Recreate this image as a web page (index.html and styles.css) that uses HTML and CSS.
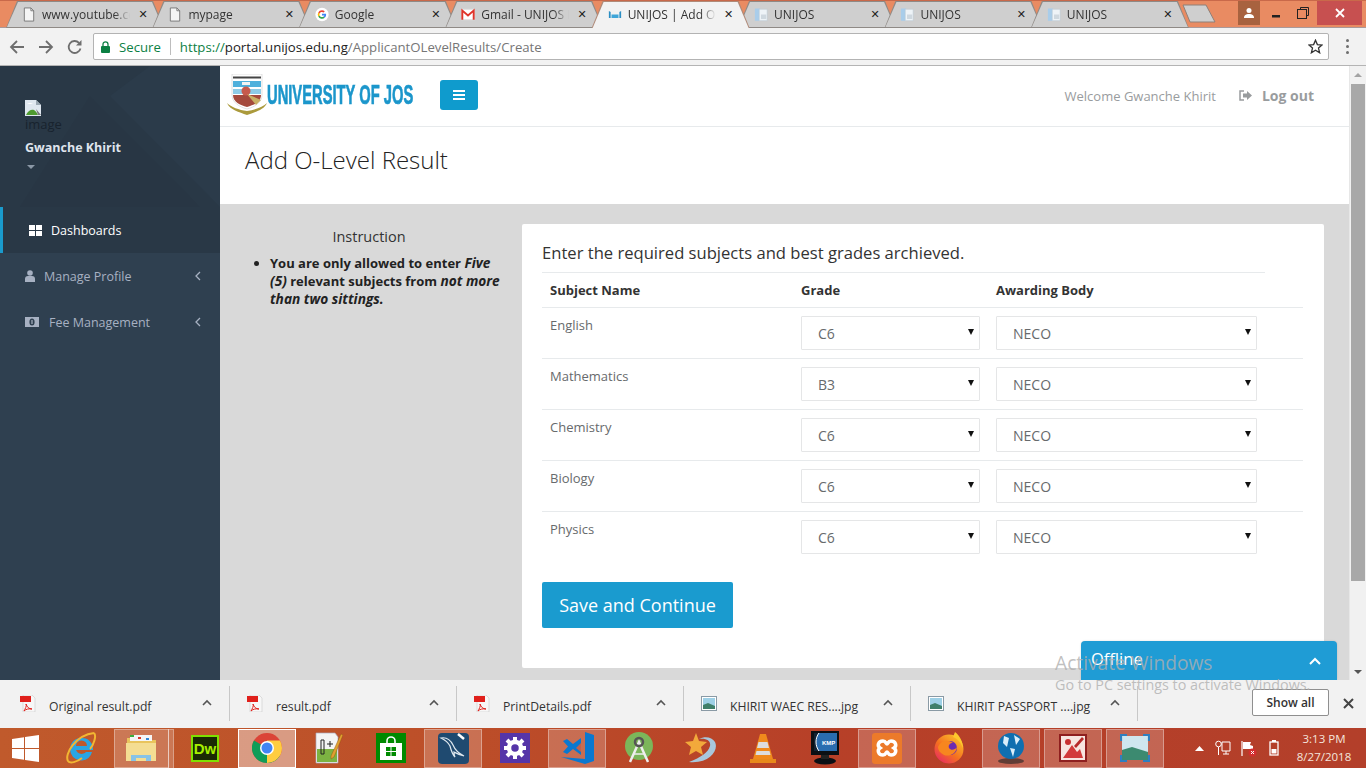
FILE: index.html
```html
<!DOCTYPE html>
<html lang="en">
<head>
<meta charset="utf-8">
<title>UNIJOS | Add O-Level Result</title>
<link rel="stylesheet" href="styles.css">
</head>
<body>
<div class="tabstrip">
  <div class="tab"><svg class="ticon" viewBox="0 0 14 16"><path d="M2 1h7l3 3v11H2z" fill="#f4f4f4" stroke="#777"/><path d="M9 1v3h3" fill="none" stroke="#777"/></svg><span class="ttl">www.youtube.com</span><span class="tx">✕</span></div>
  <div class="tab"><svg class="ticon" viewBox="0 0 14 16"><path d="M2 1h7l3 3v11H2z" fill="#f4f4f4" stroke="#777"/><path d="M9 1v3h3" fill="none" stroke="#777"/></svg><span class="ttl">mypage</span><span class="tx">✕</span></div>
  <div class="tab"><svg class="ticon" viewBox="0 0 16 16"><circle cx="8" cy="8" r="7.6" fill="#fff"/><path d="M8 3.2a4.8 4.8 0 0 1 3.2 1.2L9.900 5.700A3 3 0 0 0 5.200 7L3.700 5.800A4.800 4.800 0 0 1 8 3.200z" fill="#ea4335"/><path d="M3.700 5.800 5.200 7a3 3 0 0 0 0 2L3.700 10.200a4.800 4.800 0 0 1 0-4.400z" fill="#fbbc05"/><path d="M3.700 10.200 5.200 9a3 3 0 0 0 4.600 1.400l1.400 1.200A4.800 4.800 0 0 1 3.700 10.200z" fill="#34a853"/><path d="M8 7.100h4.700a4.800 4.800 0 0 1-1.500 4.500L9.800 10.400A2 2 0 0 0 10.600 9H8z" fill="#4285f4"/></svg><span class="ttl">Google</span><span class="tx">✕</span></div>
  <div class="tab"><svg class="ticon" viewBox="0 0 16 14"><rect x="0.500" y="1" width="15" height="12" fill="#fff" stroke="#ddd"/><path d="M1.500 13V2.500L8 8l6.500-5.500V13" fill="none" stroke="#e0352b" stroke-width="2.200"/></svg><span class="ttl">Gmail - UNIJOS Mail</span><span class="tx">✕</span></div>
  <div class="tab active"><svg class="ticon" viewBox="0 0 16 14"><path d="M1 3l2 1v7H1z" fill="#2a8ec4"/><path d="M4 7h8v4H4z" fill="#3fa5d8"/><path d="M13 4l2-1v8h-2z" fill="#2a8ec4"/></svg><span class="ttl">UNIJOS | Add O-Level</span><span class="tx">✕</span></div>
  <div class="tab"><svg class="ticon" viewBox="0 0 16 16"><path d="M1 1h6v14H1z" fill="#a9cdea"/><path d="M6 2h9v13H6z" fill="#eef3f7" stroke="#b9c7d2" stroke-width=".6"/><path d="M8 8h6v5H8z" fill="#cfd8df"/></svg><span class="ttl">UNIJOS</span><span class="tx">✕</span></div>
  <div class="tab"><svg class="ticon" viewBox="0 0 16 16"><path d="M1 1h6v14H1z" fill="#a9cdea"/><path d="M6 2h9v13H6z" fill="#eef3f7" stroke="#b9c7d2" stroke-width=".6"/><path d="M8 8h6v5H8z" fill="#cfd8df"/></svg><span class="ttl">UNIJOS</span><span class="tx">✕</span></div>
  <div class="tab"><svg class="ticon" viewBox="0 0 16 16"><path d="M1 1h6v14H1z" fill="#a9cdea"/><path d="M6 2h9v13H6z" fill="#eef3f7" stroke="#b9c7d2" stroke-width=".6"/><path d="M8 8h6v5H8z" fill="#cfd8df"/></svg><span class="ttl">UNIJOS</span><span class="tx">✕</span></div>
  <svg class="newtab" width="36" height="22" viewBox="0 0 36 22"><path d="M1 2h23l9 17H8z" fill="#cfcfcf" stroke="#8f8078"/></svg>
  <div class="winctl">
    <div class="wuser"><svg width="12" height="12" viewBox="0 0 12 12"><circle cx="6" cy="3.500" r="2.500" fill="#fff"/><path d="M1 11c0-3 2-4 5-4s5 1 5 4z" fill="#fff"/></svg></div>
    <div class="wbtn"><svg width="10" height="10" viewBox="0 0 10 10"><rect x="1" y="7" width="8" height="2.500" fill="#222"/></svg></div>
    <div class="wbtn"><svg width="12" height="12" viewBox="0 0 12 12"><path d="M3.500 2.500V.5h8v8h-2" fill="none" stroke="#222"/><rect x=".5" y="2.500" width="9" height="9" fill="none" stroke="#222"/></svg></div>
    <div class="wclose"><svg width="10" height="10" viewBox="0 0 10 10"><path d="M1 1l8 8M9 1l-8 8" stroke="#fff" stroke-width="1.800"/></svg></div>
  </div>
</div>

<div class="toolbar">
  <svg class="navi" viewBox="0 0 16 16"><path d="M15 8H2M8 2L2 8l6 6" fill="none" stroke="#6e6e6e" stroke-width="1.800"/></svg>
  <svg class="navi" viewBox="0 0 16 16"><path d="M1 8h13M8 2l6 6-6 6" fill="none" stroke="#6e6e6e" stroke-width="1.800"/></svg>
  <svg class="navi" viewBox="0 0 16 16"><path d="M13.500 9.500A6 6 0 1 1 12 3.800" fill="none" stroke="#6e6e6e" stroke-width="1.800"/><path d="M14.500 1v5.500H9z" fill="#6e6e6e"/></svg>
  <div class="omni">
    <svg class="lock" width="9" height="12" viewBox="0 0 9 12"><path d="M2 5V3.300a2.500 2.500 0 0 1 5 0V5" fill="none" stroke="#0b8043" stroke-width="1.300"/><rect y="5" width="9" height="7" rx="1" fill="#0b8043"/></svg>
    <span class="secure">Secure</span><span class="osep"></span>
    <span class="url"><span class="g">https://</span><span class="d">portal.unijos.edu.ng</span>/ApplicantOLevelResults/Create</span>
    <svg class="star" width="15" height="15" viewBox="0 0 16 16"><path d="M8 1.300l2 4.700 5 .4-3.800 3.300 1.200 5L8 12l-4.400 2.700 1.200-5L1 6.400 6 6z" fill="none" stroke="#333" stroke-width="1.400"/></svg>
  </div>
  <div class="kebab"><i></i><i></i><i></i></div>
</div>

<div class="viewport">
  <aside class="sidebar">
    <div class="profile">
      <svg class="prof-bg" width="220" height="141" viewBox="0 0 220 141"><path d="M0 0h150L110 30 220 141H0z" fill="#293846"/><path d="M90 30l110 111H20z" fill="#283644"/></svg>
      <div class="prof-in">
        <svg class="broken" width="16" height="16" viewBox="0 0 16 16"><path d="M0 0h11l5 5v11H0z" fill="#dfe7ef"/><path d="M11 0l5 5h-5z" fill="#9aa7b2"/><path d="M1 15c2-5 6-6 8-5s3 3 4 5z" fill="#4e9a2f"/><path d="M2 4q3-2 6 0z" fill="#fff"/><path d="M11 9l5 6h-3z" fill="#777"/></svg>
        <div class="alt">image</div>
        <div class="uname">Gwanche Khirit</div>
        <div class="caret"></div>
      </div>
    </div>
    <nav class="nav">
      <a class="item on"><svg class="i-dash" width="13" height="11" viewBox="0 0 13 11"><path d="M0 0h6v5H0zM7 0h6v5H7zM0 6h6v5H0zM7 6h6v5H7z" fill="#fff"/></svg><span>Dashboards</span></a>
      <a class="item"><svg class="i-user" width="10" height="12" viewBox="0 0 10 12"><circle cx="5" cy="3" r="2.800" fill="#a7b1c2"/><path d="M0 12V9q0-3 3-3h4q3 0 3 3v3z" fill="#a7b1c2"/></svg><span>Manage Profile</span><svg class="chev" width="6" height="10" viewBox="0 0 6 10"><path d="M5 1L1 5l4 4" fill="none" stroke="#a7b1c2" stroke-width="1.300"/></svg></a>
      <a class="item"><svg class="i-money" width="14" height="10" viewBox="0 0 14 10"><path d="M0 0h14v10H0z" fill="#a7b1c2"/><ellipse cx="7" cy="5" rx="2.600" ry="3.500" fill="#2f4050"/><rect x="6.400" y="3" width="1.200" height="4" fill="#a7b1c2"/></svg><span>Fee Management</span><svg class="chev" width="6" height="10" viewBox="0 0 6 10"><path d="M5 1L1 5l4 4" fill="none" stroke="#a7b1c2" stroke-width="1.300"/></svg></a>
    </nav>
  </aside>

  <main class="main">
    <header class="topbar">
      <svg class="crest" width="40" height="42" viewBox="0 0 40 42">
        <path d="M5 0h30v21c0 7-7 12-15 14C12 33 5 28 5 21z" fill="#fff" stroke="#cfcfcf" stroke-width=".6"/>
        <path d="M6 2.500h28v2H6z" fill="#444"/>
        <path d="M6 7h28v6H6z" fill="#4fb0dc"/><path d="M6 15h28v5H6z" fill="#8ecbe6"/>
        <path d="M6 21h28c0 7-7 10-14 12C13 31 6 28 6 21z" fill="#a4493c"/>
        <circle cx="19" cy="17" r="4.500" fill="#c65a4c"/><path d="M15 8h8v3h-8z" fill="#f4f4f4"/><path d="M20 20l14 6-5 5z" fill="#c9b064"/>
        <path d="M0 29c3 7 12 9 20 12 8-3 17-5 20-12-4 4-12 7-20 8-8-1-16-4-20-8z" fill="#ab9a3c"/>
      </svg>
      <div class="logotext"><span>UNIVERSITY OF JOS</span></div>
      <button class="burger" type="button" aria-label="Menu"><i></i><i></i><i></i></button>
      <div class="welcome">Welcome Gwanche Khirit</div>
      <a class="logout"><svg width="13" height="11" viewBox="0 0 13 11"><path d="M5 1H1v9h4" fill="none" stroke="#999c9e" stroke-width="1.500"/><path d="M4 3.500h4V1l5 4.500L8 10V7.500H4z" fill="#999c9e"/></svg><b>Log out</b></a>
    </header>
    <div class="pagehead"><h2>Add O-Level Result</h2></div>
    <div class="content">
      <div class="instr">
        <h4>Instruction</h4>
        <ul>
          <li>You are only allowed to enter <em>Five (5)</em> relevant subjects from <em>not more than two sittings.</em></li>
        </ul>
      </div>
      <section class="card">
        <h3>Enter the required subjects and best grades archieved.</h3>
        <table class="grid">
          <thead><tr><th class="c1">Subject Name</th><th class="c2">Grade</th><th>Awarding Body</th></tr></thead>
          <tbody>
            <tr><td>English</td><td><div class="sel g"><select><option>C6</option></select></div></td><td><div class="sel b"><select><option>NECO</option></select></div></td></tr>
            <tr><td>Mathematics</td><td><div class="sel g"><select><option>B3</option></select></div></td><td><div class="sel b"><select><option>NECO</option></select></div></td></tr>
            <tr><td>Chemistry</td><td><div class="sel g"><select><option>C6</option></select></div></td><td><div class="sel b"><select><option>NECO</option></select></div></td></tr>
            <tr><td>Biology</td><td><div class="sel g"><select><option>C6</option></select></div></td><td><div class="sel b"><select><option>NECO</option></select></div></td></tr>
            <tr><td>Physics</td><td><div class="sel g"><select><option>C6</option></select></div></td><td><div class="sel b"><select><option>NECO</option></select></div></td></tr>
          </tbody>
        </table>
        <button class="save" type="button">Save and Continue</button>
      </section>
    </div>
  </main>

  <div class="scrollbar"><div class="up"></div><div class="thumb"></div><div class="down"></div></div>
  <div class="offline"><span>Offline</span><svg width="12" height="8" viewBox="0 0 12 8"><path d="M1 7l5-5 5 5" fill="none" stroke="#fff" stroke-width="2"/></svg></div>
</div>

<div class="downloads">
  <div class="dl first"><svg class="dicon" width="16" height="17" viewBox="0 0 16 17"><path d="M3 0h9l3 3v14H3z" fill="#f7f7f7" stroke="#c9c9c9" stroke-width=".6"/><rect y="1" width="11" height="6" fill="#e0201b"/><path d="M6 9c1 3 3 5 6 5-3-.5-6 0-8 2 1-2 3-5 2-7z" fill="none" stroke="#e0201b"/></svg><span class="dn">Original result.pdf</span><svg class="dc" width="10" height="7" viewBox="0 0 10 7"><path d="M1 6l4-4 4 4" fill="none" stroke="#555" stroke-width="1.600"/></svg></div>
  <div class="dl"><svg class="dicon" width="16" height="17" viewBox="0 0 16 17"><path d="M3 0h9l3 3v14H3z" fill="#f7f7f7" stroke="#c9c9c9" stroke-width=".6"/><rect y="1" width="11" height="6" fill="#e0201b"/><path d="M6 9c1 3 3 5 6 5-3-.5-6 0-8 2 1-2 3-5 2-7z" fill="none" stroke="#e0201b"/></svg><span class="dn">result.pdf</span><svg class="dc" width="10" height="7" viewBox="0 0 10 7"><path d="M1 6l4-4 4 4" fill="none" stroke="#555" stroke-width="1.600"/></svg></div>
  <div class="dl"><svg class="dicon" width="16" height="17" viewBox="0 0 16 17"><path d="M3 0h9l3 3v14H3z" fill="#f7f7f7" stroke="#c9c9c9" stroke-width=".6"/><rect y="1" width="11" height="6" fill="#e0201b"/><path d="M6 9c1 3 3 5 6 5-3-.5-6 0-8 2 1-2 3-5 2-7z" fill="none" stroke="#e0201b"/></svg><span class="dn">PrintDetails.pdf</span><svg class="dc" width="10" height="7" viewBox="0 0 10 7"><path d="M1 6l4-4 4 4" fill="none" stroke="#555" stroke-width="1.600"/></svg></div>
  <div class="dl"><svg class="dicon" width="16" height="15" viewBox="0 0 16 15"><rect x=".5" y=".5" width="15" height="14" fill="#fff" stroke="#8a9aa5"/><rect x="2" y="2" width="12" height="11" fill="#9ed0e6"/><path d="M2 9l5-2 7 3v3H2z" fill="#3f7f6a"/></svg><span class="dn">KHIRIT WAEC RES....jpg</span><svg class="dc" width="10" height="7" viewBox="0 0 10 7"><path d="M1 6l4-4 4 4" fill="none" stroke="#555" stroke-width="1.600"/></svg></div>
  <div class="dl"><svg class="dicon" width="16" height="15" viewBox="0 0 16 15"><rect x=".5" y=".5" width="15" height="14" fill="#fff" stroke="#8a9aa5"/><rect x="2" y="2" width="12" height="11" fill="#9ed0e6"/><path d="M2 9l5-2 7 3v3H2z" fill="#3f7f6a"/></svg><span class="dn">KHIRIT PASSPORT ....jpg</span><svg class="dc" width="10" height="7" viewBox="0 0 10 7"><path d="M1 6l4-4 4 4" fill="none" stroke="#555" stroke-width="1.600"/></svg></div>
  <button class="showall" type="button">Show all</button>
  <svg class="dlx" width="11" height="11" viewBox="0 0 11 11"><path d="M1 1l9 9M10 1l-9 9" stroke="#444" stroke-width="2"/></svg>
</div>

<div class="taskbar">
  <div class="start"><svg width="27" height="27" viewBox="0 0 27 27"><path d="M0 4l12-1.700V13H0zM13 2.100L27 0v13H13zM0 14h12v10.700L0 23zM13 14h14v13l-14-2z" fill="#fff"/></svg></div>
  <div class="slot"><svg width="32" height="34" viewBox="0 0 32 34"><path d="M16 7a11 11 0 0 0-10 15.500A11 11 0 0 0 27 21h-6a6 6 0 0 1-10-2h17a11 11 0 0 0-12-12zm-5 8a5.500 5.500 0 0 1 11 0z" fill="#2ba5e2"/><path d="M3 30c-4-7 8-26 26-28M29 2c3 3-1 13-4 16M3 30c2 3 9 1 14-3" fill="none" stroke="#f2b632" stroke-width="2"/></svg></div>
  <div class="slot on stack"><div class="box"><svg width="32" height="30" viewBox="0 0 32 30"><path d="M2 5h7l2 2h20v12H2z" fill="#e9c45c"/><path d="M5 2h22v6H5z" fill="#f5f5f5"/><path d="M5 2h4v2H5z" fill="#3cae3c"/><path d="M13 4h3v2h-3z" fill="#d83a2c"/><path d="M21 5h3v2h-3z" fill="#2d86d6"/><path d="M1 10h30v18H1z" fill="#f4dd92"/><path d="M6 22h20v6h-5v-3H11v3H6z" fill="#87c3e6"/></svg></div></div>
  <div class="slot"><div class="dw"><span>Dw</span></div></div>
  <div class="slot on act"><div class="box"><svg width="30" height="30" viewBox="0 0 30 30"><circle cx="15" cy="15" r="15" fill="#db4437"/><path d="M15 15L28 22.500A15 15 0 0 1 15 30 15 15 0 0 1 2 7.500z" fill="#0f9d58"/><path d="M15 15L15 30A15 15 0 0 0 30 15 15 15 0 0 0 28 7.500H15z" fill="#ffcd40"/><circle cx="15" cy="15" r="7" fill="#fff"/><circle cx="15" cy="15" r="5.500" fill="#4285f4"/></svg></div></div>
  <div class="slot"><svg width="28" height="34" viewBox="0 0 28 34"><path d="M1 2h19l3 4v26H1z" fill="#f4f4f4" stroke="#aab" stroke-width=".7"/><path d="M2 18h20v13H2z" fill="#7cb342"/><path d="M6 9h3v14H6z" fill="none" stroke="#222"/><path d="M12 13h6M15 10v6" stroke="#222"/><path d="M26 3l2 1-9 22-3 2 0-3z" fill="#e0a030" stroke="#8a4a10" stroke-width=".4"/></svg></div>
  <div class="slot"><div class="store"><svg width="22" height="24" viewBox="0 0 22 24"><path d="M7 8V5a4 4 0 0 1 8 0v3" fill="none" stroke="#fff" stroke-width="1.600"/><path d="M0 7h22v17H0z" fill="#fff"/><path d="M6 11h4.500v4H6zM11.500 11H16v4h-4.500zM6 16h4.500v4H6zM11.500 16H16v4h-4.500z" fill="#008a00"/></svg></div></div>
  <div class="slot on"><div class="box"><div class="mysql"><svg width="30" height="32" viewBox="0 0 30 32"><path d="M3 6c5-1 9 1 12 7 2 5 5 8 11 11-5-1-8-3-10-4 0 2 0 3 1 5-3-3-4-7-5-11C10 10 7 8 3 6z" fill="none" stroke="#dfe8ef" stroke-width="1.200"/><path d="M20 2l6 5" stroke="#fff" stroke-width="2.500"/></svg></div></div></div>
  <div class="slot"><div class="gearbox"><svg width="22" height="22" viewBox="0 0 22 22"><circle cx="11" cy="11" r="6" fill="none" stroke="#fff" stroke-width="4.500"/><path d="M11 0v4M11 18v4M0 11h4M18 11h4M3 3l3 3M16 16l3 3M19 3l-3 3M6 16l-3 3" stroke="#fff" stroke-width="4"/></svg></div></div>
  <div class="slot on"><div class="box"><svg width="33" height="32" viewBox="0 0 33 32"><path d="M24 0l9 3v26l-9 3L0 25l24 2z" fill="#0a78d0"/><path d="M2 9l4-2 6 5 8-6v17l-8-6-6 5-4-2 5-5.500z" fill="#0a78d0"/><path d="M20 11l-5 5 5 4z" fill="#c0604f"/></svg></div></div>
  <div class="slot"><svg width="28" height="32" viewBox="0 0 28 32"><circle cx="14" cy="14" r="14" fill="#7cb65a"/><path d="M5 30L14 10l9 20" fill="none" stroke="#eee" stroke-width="2.500"/><path d="M8 22h12" stroke="#eee" stroke-width="1.500"/><circle cx="14" cy="10" r="4" fill="none" stroke="#555" stroke-width="2.500"/></svg></div>
  <div class="slot"><svg width="32" height="32" viewBox="0 0 32 32"><path d="M4 30C25 32 34 18 30 10 27 5 20 4 14 7c8-1 12 2 11 7-2 7-9 11-21 16z" fill="#a8c7dc"/><path d="M11 1l3 8 8 1-6 5 2 8-7-4-7 4 2-8-6-5 8-1z" fill="#f2a93b"/></svg></div>
  <div class="slot"><svg width="26" height="30" viewBox="0 0 26 30"><path d="M10 1h6l7 25H3z" fill="#f08a1c"/><path d="M8.500 9h9l1.500 6H7zM6.500 18h13l1 4h-15z" fill="#ddd"/><path d="M0 26h26v4H0z" fill="#e8891a"/></svg></div>
  <div class="slot"><svg width="28" height="34" viewBox="0 0 28 34"><rect width="28" height="24" fill="#0b0f14"/><rect x="3" y="2" width="23" height="18" fill="#2a6db0"/><path d="M3 2h5c-4 5-4 13 0 18H3z" fill="#123"/><path d="M8 2c-4 5-4 13 0 18" fill="none" stroke="#fff"/><text x="11" y="14" class="kmp">KMP</text><ellipse cx="14" cy="30" rx="11" ry="3.500" fill="#0b0f14"/><rect x="10" y="24" width="8" height="4" fill="#222"/></svg></div>
  <div class="slot on"><div class="box"><div class="xampp"><svg width="26" height="20" viewBox="0 0 26 20"><path d="M9 3c-5 0-6 5-3 7-3 2-2 7 3 7 3 0 3-3 4-3s1 3 4 3c5 0 6-5 3-7 3-2 2-7-3-7-3 0-3 3-4 3S12 3 9 3z" fill="none" stroke="#fff" stroke-width="3.500"/></svg></div></div></div>
  <div class="slot"><svg width="30" height="32" viewBox="0 0 30 32"><defs><linearGradient id="ff" x1="0.900" y1="0" x2="0.100" y2="1"><stop offset="0" stop-color="#fdc92d"/><stop offset=".55" stop-color="#f5701f"/><stop offset="1" stop-color="#e6226a"/></linearGradient></defs><circle cx="15" cy="17" r="14.500" fill="url(#ff)"/><path d="M21 0c5 4 8 10 8 16-2-5-5-9-10-11z" fill="#fdc92d"/><circle cx="16" cy="16" r="7" fill="#6c2bb0"/><path d="M4 15c3-7 10-8 15-4-3 0-5 2-4 5 2 3 6 2 8-1-1 7-8 10-13 8-4-2-6-5-6-8z" fill="#f7861f"/></svg></div>
  <div class="slot on"><div class="box"><svg width="30" height="32" viewBox="0 0 30 32"><ellipse cx="15" cy="29" rx="13" ry="3" fill="#222" opacity=".6"/><circle cx="15" cy="14" r="13" fill="#0f6fb0"/><path d="M8 4l5 2-2 9-4-4zM18 3l6 4-4 6zM14 16l5 1-2 8z" fill="#d9eefa"/></svg></div></div>
  <div class="slot on"><div class="box"><svg width="28" height="28" viewBox="0 0 28 28"><rect width="28" height="28" fill="#8f1f1f"/><rect x="2" y="2" width="24" height="24" fill="#f7e5e0"/><path d="M4 24L13 11l5 7 3-3 3 9z" fill="#d23a3a"/><circle cx="9" cy="8" r="3" fill="#c83030"/><path d="M15 12L23 3l2 2-8 9z" fill="#b72a2a"/></svg></div></div>
  <div class="slot on"><div class="box"><svg width="30" height="28" viewBox="0 0 30 28"><rect x="2" y="2" width="26" height="24" fill="#cfe6ef"/><path d="M2 16l10-3 16 5v8H2z" fill="#3c8a70"/><path d="M1 7V1h6M23 1h6v6M29 21v6h-6M7 27H1v-6" fill="none" stroke="#2f7fc0" stroke-width="2.200"/></svg></div></div>
  <div class="tray">
    <svg class="t-up" width="9" height="5" viewBox="0 0 9 5"><path d="M0 5l4.500-5L9 5z" fill="#fff"/></svg>
    <svg width="16" height="16" viewBox="0 0 16 16"><circle cx="3.500" cy="4" r="2.800" fill="none" stroke="#fff"/><path d="M3.500 7v8" stroke="#fff"/><path d="M7 2h8v9H7zM8 14h6M11 11v3" fill="none" stroke="#fff"/></svg>
    <svg width="16" height="17" viewBox="0 0 16 17"><path d="M1 1v15" stroke="#fff" stroke-width="1.200"/><path d="M2 2h8l-1 3 3 1v3H2z" fill="#fff"/><circle cx="11.500" cy="12.500" r="4" fill="#d32f2f"/><path d="M10 11l3 3M13 11l-3 3" stroke="#fff"/></svg>
    <svg width="10" height="16" viewBox="0 0 10 16"><rect x="3" y="0" width="4" height="2" fill="#fff"/><rect x="1" y="2" width="8" height="13" fill="none" stroke="#fff" stroke-width="1.300"/><rect x="2.500" y="9" width="5" height="4.500" fill="#fff"/></svg>
    <div class="clock"><div>3:13 PM</div><div>8/27/2018</div></div>
  </div>
</div>

<div class="watermark"><div class="w1">Activate Windows</div><div class="w2">Go to PC settings to activate Windows.</div></div>
</body>
</html>
```

FILE: styles.css
```css
* { box-sizing: border-box; }
html, body { margin: 0; padding: 0; height: 768px; overflow: hidden; }
body { position: relative; display: flex; flex-direction: column; width: 1366px; font-family: "Open Sans", "Noto Sans", sans-serif; color: #676a6c; }

/* tab strip */
.tabstrip { height: 28px; flex: none; display: flex; align-items: flex-end; padding-left: 6px; background: #e98b62; border-top: 1px solid #c9694a; position: relative; box-shadow: inset 0 -1px 0 #a99; }
.tab { position: relative; width: 158px; height: 27px; margin-right: -11.600px; flex: none; display: flex; align-items: center; padding-left: 16px; background: #8f8a86; clip-path: polygon(0 100%, 11px 0, 147px 0, 158px 100%); color: #333; font-size: 12px; }
.tab::before { content: ""; position: absolute; inset: 0 0 1px 0; background: #cfcfcf; clip-path: polygon(1px 100%, 12px 1px, 146px 1px, 157px 100%); }
.tab.active { z-index: 2; background: #b08a78; height: 27px; }
.tab.active::before { background: #f2f2f2; inset: 0; }
.tab > * { position: relative; }
.ticon { width: 14px; height: 15px; flex: none; }
.ttl { margin-left: 6px; width: 88px; white-space: nowrap; overflow: hidden; flex: none; -webkit-mask-image: linear-gradient(90deg, #000 82%, transparent 100%); mask-image: linear-gradient(90deg, #000 82%, transparent 100%); }
.tx { margin-left: 6px; font-size: 11px; color: #222; font-family: "DejaVu Sans", sans-serif; font-weight: 700; width: 14px; text-align: center; }
.newtab { margin-left: 5px; margin-bottom: 3px; flex: none; }
.winctl { position: absolute; right: 4px; top: 0; display: flex; height: 24px; }
.wuser { width: 22px; background: #a8623f; display: flex; align-items: center; justify-content: center; margin-right: 2px; }
.wbtn { width: 27px; display: flex; align-items: center; justify-content: center; }
.wclose { width: 45px; margin-left: 1px; background: #c75050; display: flex; align-items: center; justify-content: center; }

/* toolbar */
.toolbar { height: 38px; flex: none; display: flex; align-items: center; padding-left: 9px; background: #f2f2f2; border-bottom: 1px solid #b4b4b4; gap: 0; }
.navi { width: 16px; height: 16px; margin-right: 13px; flex: none; }
.navi:nth-child(3) { margin-right: 12px; }
.omni { width: 1237px; height: 27px; background: #fff; border: 1px solid #b3b3b3; border-radius: 2px; display: flex; align-items: center; padding: 0 5px 0 7px; font-size: 13.200px; margin-left: -2px; }
.lock { flex: none; margin-right: 9px; }
.secure { color: #0b8043; }
.osep { width: 1px; height: 17px; background: #bdbdbd; margin: 0 9px; }
.url { color: #767676; flex: 1; white-space: nowrap; }
.url .g { color: #0b8043; }
.url .d { color: #222; }
.star { flex: none; }
.kebab { width: 37px; display: flex; flex-direction: column; align-items: center; gap: 3px; }
.kebab i { width: 3px; height: 3px; border-radius: 50%; background: #6e6e6e; }

/* viewport */
.viewport { position: relative; height: 614px; flex: none; display: flex; background: #d9d9d9; overflow: hidden; }
.sidebar { width: 220px; flex: none; background: #2f4050; }
.profile { position: relative; height: 141px; background: #2b3b4a; overflow: hidden; }
.prof-bg { position: absolute; left: 0; top: 0; }
.prof-in { position: relative; padding: 34px 0 0 25px; }
.broken { display: block; }
.alt { font-size: 13px; line-height: 18px; margin-top: -1px; color: #18232e; }
.uname { margin-top: 6px; font-size: 12.500px; line-height: 18px; font-weight: 700; color: #dfe4ed; }
.caret { width: 0; height: 0; margin: 8px 0 0 2px; border: 4px solid transparent; border-top-color: #8b98a6; border-bottom: 0; }
.nav { display: flex; flex-direction: column; }
.item { height: 46px; display: flex; align-items: center; padding-left: 25px; position: relative; font-size: 12.500px; color: #a7b1c2; }
.item.on { background: #293846; color: #fff; border-left: 3px solid #1a9bcd; padding-left: 26px; }
.item svg:first-child { flex: none; }
.i-dash { margin-right: 9px; }
.i-user { margin-right: 9px; }
.i-money { margin-right: 10px; }
.chev { position: absolute; right: 19px; top: 18px; }

/* main */
.main { width: 1129px; flex: none; display: flex; flex-direction: column; }
.topbar { height: 61px; flex: none; background: #fff; border-bottom: 1px solid #e7eaec; display: flex; align-items: center; padding-left: 7px; }
.crest { flex: none; margin-top: -3px; }
.logotext { width: 146px; height: 28px; flex: none; margin-top: -2px; }
.logotext span { display: inline-block; white-space: nowrap; font-family: "Liberation Sans", sans-serif; font-weight: 700; font-size: 28px; line-height: 28px; color: #1b96cb; transform: scaleX(.526); transform-origin: 0 50%; -webkit-text-stroke: .7px #1b96cb; }
.burger { width: 38px; height: 30px; margin-left: 27px; border: 0; border-radius: 3px; background: #0f9bcd; display: flex; flex-direction: column; align-items: center; justify-content: center; gap: 2px; padding: 0; margin-top: -2px; }
.burger i { width: 12px; height: 2px; background: #fff; }
.welcome { margin-left: auto; font-size: 13px; color: #999c9e; }
.logout { display: flex; align-items: center; margin: -1px 35px 0 23px; font-size: 14px; color: #999c9e; }
.logout b { margin-left: 10px; }
.pagehead { height: 77px; flex: none; background: #fff; padding: 17px 0 0 25px; }
.pagehead h2 { margin: 0; font-weight: 300; font-size: 24px; line-height: 32px; color: #222; }
.content { flex: 1; display: flex; padding: 20px 25px 0 0; }
.instr { width: 302px; flex: none; color: #222; font-size: 13px; }
.instr h4 { margin: 4px 0 0; font-weight: 400; font-size: 14.500px; line-height: 18px; text-align: center; color: #333; width: 298px; }
.instr ul { margin: 8px 0 0; padding: 0 17px 0 50px; font-weight: 700; line-height: 18px; }
.instr em { font-style: italic; font-size: 13.700px; }
.card { width: 802px; height: 444px; background: #fff; border-radius: 2px; padding: 18px 20px 0; }
.card h3 { margin: 0; width: 723px; height: 31px; font-weight: 400; font-size: 16.600px; line-height: 22px; color: #333; border-bottom: 1px solid #e7eaec; }
.grid { width: 761px; border-collapse: collapse; table-layout: fixed; font-size: 13px; color: #676a6c; }
.grid th { height: 34px; text-align: left; padding: 0 8px; font-weight: 700; color: #333; }
.c1 { width: 251px; }
.c2 { width: 195px; }
.grid td { height: 51px; padding: 8px; vertical-align: top; border-top: 1px solid #e7eaec; line-height: 20px; }
.grid td:first-child { padding-top: 7px; }
.sel { position: relative; height: 34px; }
.sel.g { width: 179px; }
.sel.b { width: 261px; }
.sel select { appearance: none; -webkit-appearance: none; display: block; width: 100%; height: 34px; padding: 2px 0 0 16px; border: 1px solid #e5e6e7; border-radius: 1px; background: #fff; font: 14px "Open Sans", sans-serif; color: #676a6c; }
.sel::after { content: ""; position: absolute; right: 6px; top: 13px; border: 3.500px solid transparent; border-top: 6px solid #111; border-bottom: 0; }
.save { display: block; margin-top: 20px; width: 191px; height: 46px; border: 0; border-radius: 2px; background: #1a9bcf; color: #fff; font: 18px "Open Sans", sans-serif; padding: 0; }

/* scrollbar */
.scrollbar { width: 17px; flex: none; background: #f1f1f1; display: flex; flex-direction: column; align-items: center; position: relative; border-left: 1px solid #e7e7e7; }
.up { margin-top: 7px; border: 4px solid transparent; border-bottom: 4px solid #a3a3a3; border-top: 0; width: 0; }
.thumb { width: 14px; height: 497px; margin-top: 7px; background: #a8a8a8; }
.down { position: absolute; bottom: 6px; left: 4px; border: 4px solid transparent; border-top: 4px solid #555; border-bottom: 0; width: 0; }
.offline { position: absolute; right: 29px; bottom: 0; width: 256px; height: 39px; background: #1f9cd5; border-radius: 4px 4px 0 0; box-shadow: 0 0 2px rgba(0,0,0,.15); display: flex; align-items: center; justify-content: space-between; padding: 0 16px 0 10px; color: #fff; font-size: 16.500px; }
.offline span { margin-top: -4px; }

/* downloads */
.downloads { height: 48px; flex: none; background: #f2f2f2; display: flex; align-items: stretch; position: relative; }
.dl { width: 227px; flex: none; position: relative; display: flex; align-items: center; padding-left: 17px; font-size: 12.200px; color: #333; }
.dl.first { width: 230px; padding-left: 20px; }
.dl::after { content: ""; position: absolute; right: 0; top: 6px; bottom: 7px; width: 1px; background: #c8c8c8; }
.dicon { flex: none; margin-top: -2px; }
.dn { margin-left: 13px; white-space: nowrap; margin-top: 4px; }
.dc { position: absolute; right: 18px; top: 19px; }
.showall { position: absolute; left: 1252px; top: 9px; width: 77px; height: 27px; padding: 0; background: #fff; border: 1px solid #8f8f8f; border-radius: 2px; font: 600 12px "Open Sans", sans-serif; color: #333; }
.dlx { position: absolute; left: 1343px; top: 18px; }

/* taskbar */
.taskbar { height: 40px; flex: none; display: flex; align-items: center; background: linear-gradient(90deg, #c05a2c 0%, #bd5029 30%, #b74028 60%, #b33f2a 100%); color: #fff; }
.start { width: 50px; flex: none; display: flex; justify-content: center; }
.slot { width: 62px; height: 40px; flex: none; display: flex; align-items: center; justify-content: center; position: relative; }
.box { width: 58px; height: 39px; display: flex; align-items: center; justify-content: center; background: rgba(255,255,255,.2); border: 1px solid rgba(255,255,255,.35); }
.act .box { background: rgba(255,255,255,.42); border-color: #fff; }
.stack .box { width: 55px; margin-left: -4px; }
.stack::after { content: ""; position: absolute; right: 0; top: 1px; width: 4px; height: 38px; background: rgba(255,255,255,.2); border: 1px solid rgba(255,255,255,.3); }
.dw { width: 28px; height: 27px; background: #1b2a04; border: 2px solid #7fe000; display: flex; align-items: center; justify-content: center; font: 700 15px "Liberation Sans", sans-serif; color: #a6f000; }
.store { width: 30px; height: 30px; background: #008a00; display: flex; align-items: center; justify-content: center; }
.mysql { width: 31px; height: 31px; border-radius: 4px; background: #1f4a70; display: flex; align-items: center; justify-content: center; }
.gearbox { width: 30px; height: 30px; background: #5535a8; display: flex; align-items: center; justify-content: center; }
.xampp { width: 30px; height: 31px; border-radius: 3px; background: #ec7a2a; display: flex; align-items: center; justify-content: center; }
.kmp { font: 700 6px "Liberation Sans", sans-serif; fill: #fff; }
.tray { flex: 1; display: flex; align-items: center; padding-left: 29px; }
.t-up { margin-right: 11px; }
.tray svg:nth-child(2) { margin-right: 10px; }
.tray svg:nth-child(3) { margin-right: 12px; }
.clock { margin-left: 15px; text-align: center; font-size: 11.500px; line-height: 18px; width: 60px; white-space: nowrap; color: #f5e5dd; }

/* watermark */
.watermark { position: absolute; left: 1055px; top: 649px; color: rgba(175,175,175,.8); white-space: nowrap; pointer-events: none; }
.w1 { font-size: 19.200px; line-height: 28px; }
.w2 { font-size: 14.350px; line-height: 18px; margin-top: -1px; }
```
